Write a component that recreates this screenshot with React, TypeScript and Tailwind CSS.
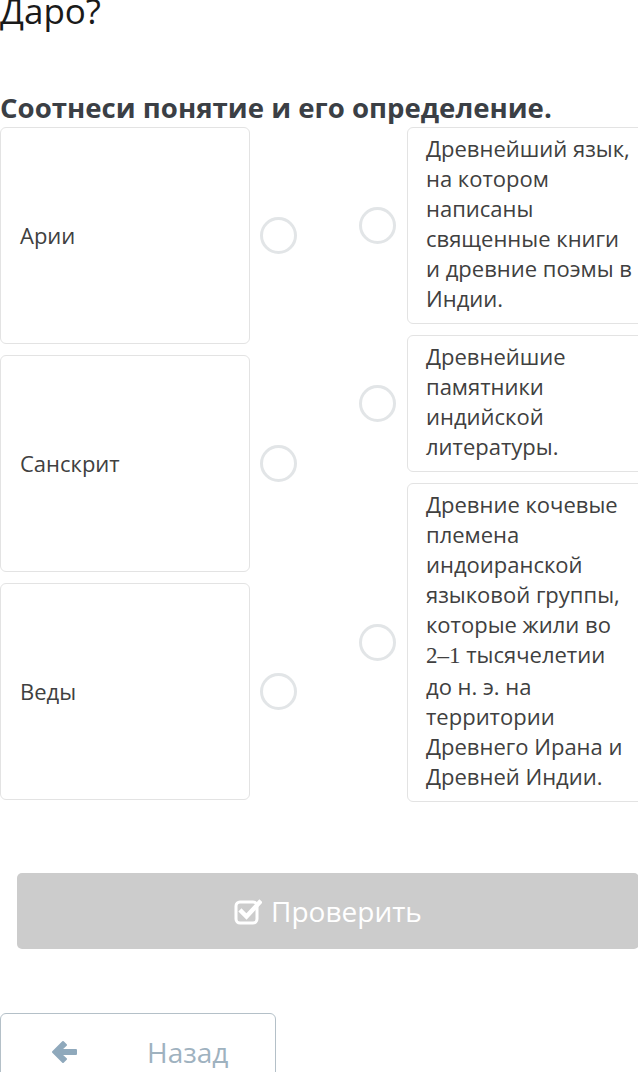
import React from 'react';

const leftItems = ['Арии', 'Санскрит', 'Веды'];

const rightItems: React.ReactNode[] = [
  'Древнейший язык, на котором написаны священные книги и древние поэмы в Индии.',
  'Древнейшие памятники индийской литературы.',
  <>
    Древние кочевые племена индоиранской языковой группы, которые жили во{' '}
    <span
      className="whitespace-nowrap text-[23px]"
      style={{ fontFamily: '"Liberation Serif", "DejaVu Serif", serif' }}
    >
      2–1
    </span>{' '}
    тысячелетии до н. э. на территории Древнего Ирана и Древней Индии.
  </>,
];

const Circle: React.FC = () => (
  <div className="w-[37px] h-[37px] rounded-full border-[3px] border-[#e2e5e7] bg-white shrink-0" />
);

const App: React.FC = () => {
  return (
    <div
      className="w-[638px] h-[1072px] overflow-hidden bg-white text-[#404040]"
      style={{ fontFamily: '"Open Sans", "Noto Sans", sans-serif' }}
    >
      <div className="text-[35px] leading-[40px] text-[#1a1a1a] -mt-[9px]">Даро?</div>

      <h2 className="mt-[58px] text-[27.6px] leading-[36px] font-bold text-[#3b3f45] whitespace-nowrap">
        Соотнеси понятие и его определение.
      </h2>

      <div className="flex mt-[2px]">
        {/* left column */}
        <div className="flex flex-col gap-[11px]">
          {leftItems.map((t) => (
            <div key={t} className="flex items-center">
              <div className="w-[250px] h-[217px] border border-[#e3e3e3] rounded-[6px] flex items-center pl-[19px] text-[22px]">
                {t}
              </div>
              <div className="ml-[10px]">
                <Circle />
              </div>
            </div>
          ))}
        </div>

        {/* right column */}
        <div className="flex flex-col gap-[11px] ml-[62px]">
          {rightItems.map((t, i) => (
            <div key={i} className="flex items-center">
              <Circle />
              <div className="ml-[11px] w-[252px] shrink-0 border border-[#e3e3e3] rounded-[6px] pl-[18px] pr-[23px] pt-[5px] pb-[10px] text-[22px] leading-[30px]">
                {t}
              </div>
            </div>
          ))}
        </div>
      </div>

      <div className="mt-[71px] ml-[17px] w-[622px] h-[76px] bg-[#cccccc] rounded-[5px] flex items-center justify-center gap-[9px] text-white text-[28px]">
        <svg width="28" height="27" viewBox="0 0 28 27" fill="none">
          <rect x="2" y="4" width="21" height="21" rx="4" stroke="white" strokeWidth="3" />
          <path d="M7.5 13.5 L12.5 18.5 L25.5 4.5" stroke="white" strokeWidth="4.5" strokeLinecap="square" fill="none" />
        </svg>
        <span>Проверить</span>
      </div>

      <div className="mt-[64px] w-[276px] h-[80px] border border-[#b4c0c8] rounded-[6px] flex items-start pt-[19px]">
        <svg className="ml-[50px] mt-[7px]" width="27" height="24" viewBox="0 0 27 24">
          <path
            d="M12 2 L2 12 L12 22 L15 19 L9.5 14 L25 14 L25 10 L9.5 10 L15 5 Z"
            fill="#8fa9bc"
            stroke="#8fa9bc"
            strokeWidth="2"
            strokeLinejoin="round"
          />
        </svg>
        <span className="ml-[69px] text-[28px] leading-[38px] text-[#9fb2bf]">Назад</span>
      </div>
    </div>
  );
};

export default App;
